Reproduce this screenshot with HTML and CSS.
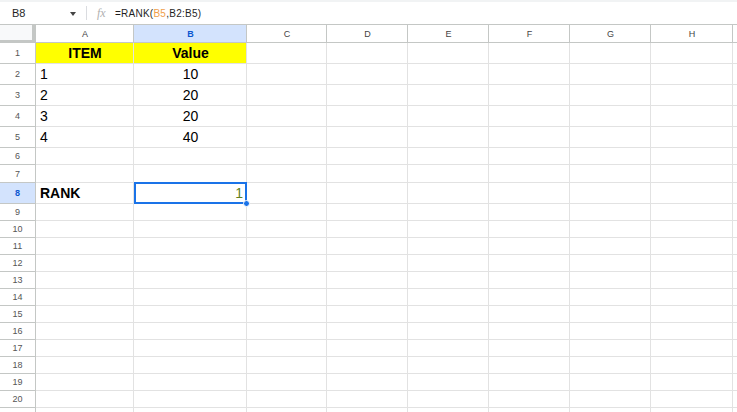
FILE: index.html
```html
<!DOCTYPE html>
<html lang="en">
<head>
  <meta charset="UTF-8" />
  <title>Sheet - RANK</title>
  <link rel="stylesheet" href="styles.css">
</head>
<body>

  <!-- Formula bar -->
  <div class="formula-bar">
    <div class="name-box">
      <span class="cell-ref">B8</span>
      <span class="caret"></span>
    </div>
    <div class="divider"></div>
    <span class="fx">fx</span>
    <span class="formula">=RANK(<span class="ref-a">B5</span>,B2:B5)</span>
  </div>

  <!-- Grid -->
  <div class="sheet">
    <div class="row col-head">
      <div class="cell corner"></div>
      <div class="cell">A</div>
      <div class="cell active">B</div>
      <div class="cell">C</div>
      <div class="cell">D</div>
      <div class="cell">E</div>
      <div class="cell">F</div>
      <div class="cell">G</div>
      <div class="cell">H</div>
      <div class="cell"></div>
    </div>

    <div class="row tall">
      <div class="cell rh">1</div>
      <div class="cell hl bold center">ITEM</div>
      <div class="cell hl bold center">Value</div>
      <div class="cell"></div><div class="cell"></div><div class="cell"></div><div class="cell"></div><div class="cell"></div><div class="cell"></div><div class="cell"></div>
    </div>
    <div class="row tall">
      <div class="cell rh">2</div>
      <div class="cell">1</div>
      <div class="cell center">10</div>
      <div class="cell"></div><div class="cell"></div><div class="cell"></div><div class="cell"></div><div class="cell"></div><div class="cell"></div><div class="cell"></div>
    </div>
    <div class="row tall">
      <div class="cell rh">3</div>
      <div class="cell">2</div>
      <div class="cell center">20</div>
      <div class="cell"></div><div class="cell"></div><div class="cell"></div><div class="cell"></div><div class="cell"></div><div class="cell"></div><div class="cell"></div>
    </div>
    <div class="row tall">
      <div class="cell rh">4</div>
      <div class="cell">3</div>
      <div class="cell center">20</div>
      <div class="cell"></div><div class="cell"></div><div class="cell"></div><div class="cell"></div><div class="cell"></div><div class="cell"></div><div class="cell"></div>
    </div>
    <div class="row tall">
      <div class="cell rh">5</div>
      <div class="cell">4</div>
      <div class="cell center">40</div>
      <div class="cell"></div><div class="cell"></div><div class="cell"></div><div class="cell"></div><div class="cell"></div><div class="cell"></div><div class="cell"></div>
    </div>
    <div class="row short">
      <div class="cell rh">6</div>
      <div class="cell"></div><div class="cell"></div><div class="cell"></div><div class="cell"></div><div class="cell"></div><div class="cell"></div><div class="cell"></div><div class="cell"></div><div class="cell"></div>
    </div>
    <div class="row mid">
      <div class="cell rh">7</div>
      <div class="cell"></div><div class="cell"></div><div class="cell"></div><div class="cell"></div><div class="cell"></div><div class="cell"></div><div class="cell"></div><div class="cell"></div><div class="cell"></div>
    </div>
    <div class="row tall">
      <div class="cell rh active">8</div>
      <div class="cell bold">RANK</div>
      <div class="cell right selected"><span class="result">1</span><span class="handle"></span></div>
      <div class="cell"></div><div class="cell"></div><div class="cell"></div><div class="cell"></div><div class="cell"></div><div class="cell"></div><div class="cell"></div>
    </div>
    <div class="row short"><div class="cell rh">9</div><div class="cell"></div><div class="cell"></div><div class="cell"></div><div class="cell"></div><div class="cell"></div><div class="cell"></div><div class="cell"></div><div class="cell"></div><div class="cell"></div></div>
    <div class="row short"><div class="cell rh">10</div><div class="cell"></div><div class="cell"></div><div class="cell"></div><div class="cell"></div><div class="cell"></div><div class="cell"></div><div class="cell"></div><div class="cell"></div><div class="cell"></div></div>
    <div class="row short"><div class="cell rh">11</div><div class="cell"></div><div class="cell"></div><div class="cell"></div><div class="cell"></div><div class="cell"></div><div class="cell"></div><div class="cell"></div><div class="cell"></div><div class="cell"></div></div>
    <div class="row short"><div class="cell rh">12</div><div class="cell"></div><div class="cell"></div><div class="cell"></div><div class="cell"></div><div class="cell"></div><div class="cell"></div><div class="cell"></div><div class="cell"></div><div class="cell"></div></div>
    <div class="row short"><div class="cell rh">13</div><div class="cell"></div><div class="cell"></div><div class="cell"></div><div class="cell"></div><div class="cell"></div><div class="cell"></div><div class="cell"></div><div class="cell"></div><div class="cell"></div></div>
    <div class="row short"><div class="cell rh">14</div><div class="cell"></div><div class="cell"></div><div class="cell"></div><div class="cell"></div><div class="cell"></div><div class="cell"></div><div class="cell"></div><div class="cell"></div><div class="cell"></div></div>
    <div class="row short"><div class="cell rh">15</div><div class="cell"></div><div class="cell"></div><div class="cell"></div><div class="cell"></div><div class="cell"></div><div class="cell"></div><div class="cell"></div><div class="cell"></div><div class="cell"></div></div>
    <div class="row short"><div class="cell rh">16</div><div class="cell"></div><div class="cell"></div><div class="cell"></div><div class="cell"></div><div class="cell"></div><div class="cell"></div><div class="cell"></div><div class="cell"></div><div class="cell"></div></div>
    <div class="row short"><div class="cell rh">17</div><div class="cell"></div><div class="cell"></div><div class="cell"></div><div class="cell"></div><div class="cell"></div><div class="cell"></div><div class="cell"></div><div class="cell"></div><div class="cell"></div></div>
    <div class="row short"><div class="cell rh">18</div><div class="cell"></div><div class="cell"></div><div class="cell"></div><div class="cell"></div><div class="cell"></div><div class="cell"></div><div class="cell"></div><div class="cell"></div><div class="cell"></div></div>
    <div class="row short"><div class="cell rh">19</div><div class="cell"></div><div class="cell"></div><div class="cell"></div><div class="cell"></div><div class="cell"></div><div class="cell"></div><div class="cell"></div><div class="cell"></div><div class="cell"></div></div>
    <div class="row short"><div class="cell rh">20</div><div class="cell"></div><div class="cell"></div><div class="cell"></div><div class="cell"></div><div class="cell"></div><div class="cell"></div><div class="cell"></div><div class="cell"></div><div class="cell"></div></div>
    <div class="row short"><div class="cell rh"></div><div class="cell"></div><div class="cell"></div><div class="cell"></div><div class="cell"></div><div class="cell"></div><div class="cell"></div><div class="cell"></div><div class="cell"></div><div class="cell"></div></div>
  </div>

</body>
</html>
```

FILE: styles.css
```css
/* --------------------------------
   Reset / Basic
----------------------------------- */
* {
  margin: 0;
  padding: 0;
  box-sizing: border-box;
}
html, body {
  width: 737px;
  height: 412px;
  overflow: hidden;
  background: #fff;
  font-family: 'Liberation Sans', Arial, sans-serif;
  color: #000;
}

/* --------------------------------
   Formula bar
----------------------------------- */
.formula-bar {
  height: 24px;
  display: flex;
  align-items: center;
  border-top: 2px solid #f1f3f4;
  font-size: 11px;
}
.name-box {
  width: 86px;
  display: flex;
  align-items: center;
  padding-left: 12px;
}
.cell-ref {
  color: #1f1f1f;
  width: 58px;
}
.caret {
  width: 0;
  height: 0;
  border-left: 3.5px solid transparent;
  border-right: 3.5px solid transparent;
  border-top: 4px solid #444;
  margin-top: 1px;
}
.divider {
  width: 1px;
  height: 14px;
  background: #dadce0;
}
.fx {
  font-family: 'Liberation Serif', serif;
  font-style: italic;
  color: #b0b0b0;
  font-size: 12px;
  margin-left: 10px;
  width: 18px;
}
.formula {
  font-size: 10px;
  letter-spacing: 0.25px;
  color: #1f1f1f;
}
.ref-a {
  color: #f0a04b;
}

/* --------------------------------
   Grid
----------------------------------- */
.sheet {
  width: 737px;
  overflow: hidden;
}
.row {
  display: grid;
  grid-template-columns: 36px 98px 113px 80px 81px 81px 81px 81px 82px 1fr;
}
.cell {
  display: flex;
  align-items: center;
  padding: 0 3px 0 4px;
  border-right: 1px solid #e2e2e2;
  border-bottom: 1px solid #e2e2e2;
  font-size: 14px;
  white-space: nowrap;
  overflow: hidden;
}
.tall { height: 21px; }
.mid { height: 18px; }
.short { height: 17px; }

/* column headers */
.col-head {
  height: 19px;
  border-top: 1px solid #c4c7c5;
}
.col-head .cell {
  justify-content: center;
  font-size: 9px;
  color: #444;
  border-color: #c4c7c5;
}
.col-head .cell.active {
  background: #d3e3fd;
  color: #0b57d0;
  font-weight: bold;
}
.col-head .cell.corner {
  background: #f8f9fa;
  border-right: 4px solid #c4c7c5;
  border-bottom: 3px solid #c4c7c5;
}

/* row headers */
.cell.rh {
  justify-content: center;
  padding: 0;
  font-size: 9px;
  color: #555;
  border-color: #c4c7c5;
}
.cell.rh.active {
  background: #d3e3fd;
  color: #0b57d0;
  font-weight: bold;
}

/* cells */
.hl { background: #ffff00; }
.bold { font-weight: bold; }
.center { justify-content: center; }
.right { justify-content: flex-end; }

.cell.selected {
  position: relative;
  overflow: visible;
}
.cell.selected::after {
  content: "";
  position: absolute;
  top: -1px;
  left: 0;
  right: -1px;
  bottom: -1px;
  border: 2px solid #1a73e8;
}
.result {
  color: #5f7f1c;
}
.handle {
  position: absolute;
  right: -4px;
  bottom: -4px;
  width: 7px;
  height: 7px;
  border-radius: 50%;
  background: #1a73e8;
  border: 1px solid #fff;
  z-index: 2;
}
```
